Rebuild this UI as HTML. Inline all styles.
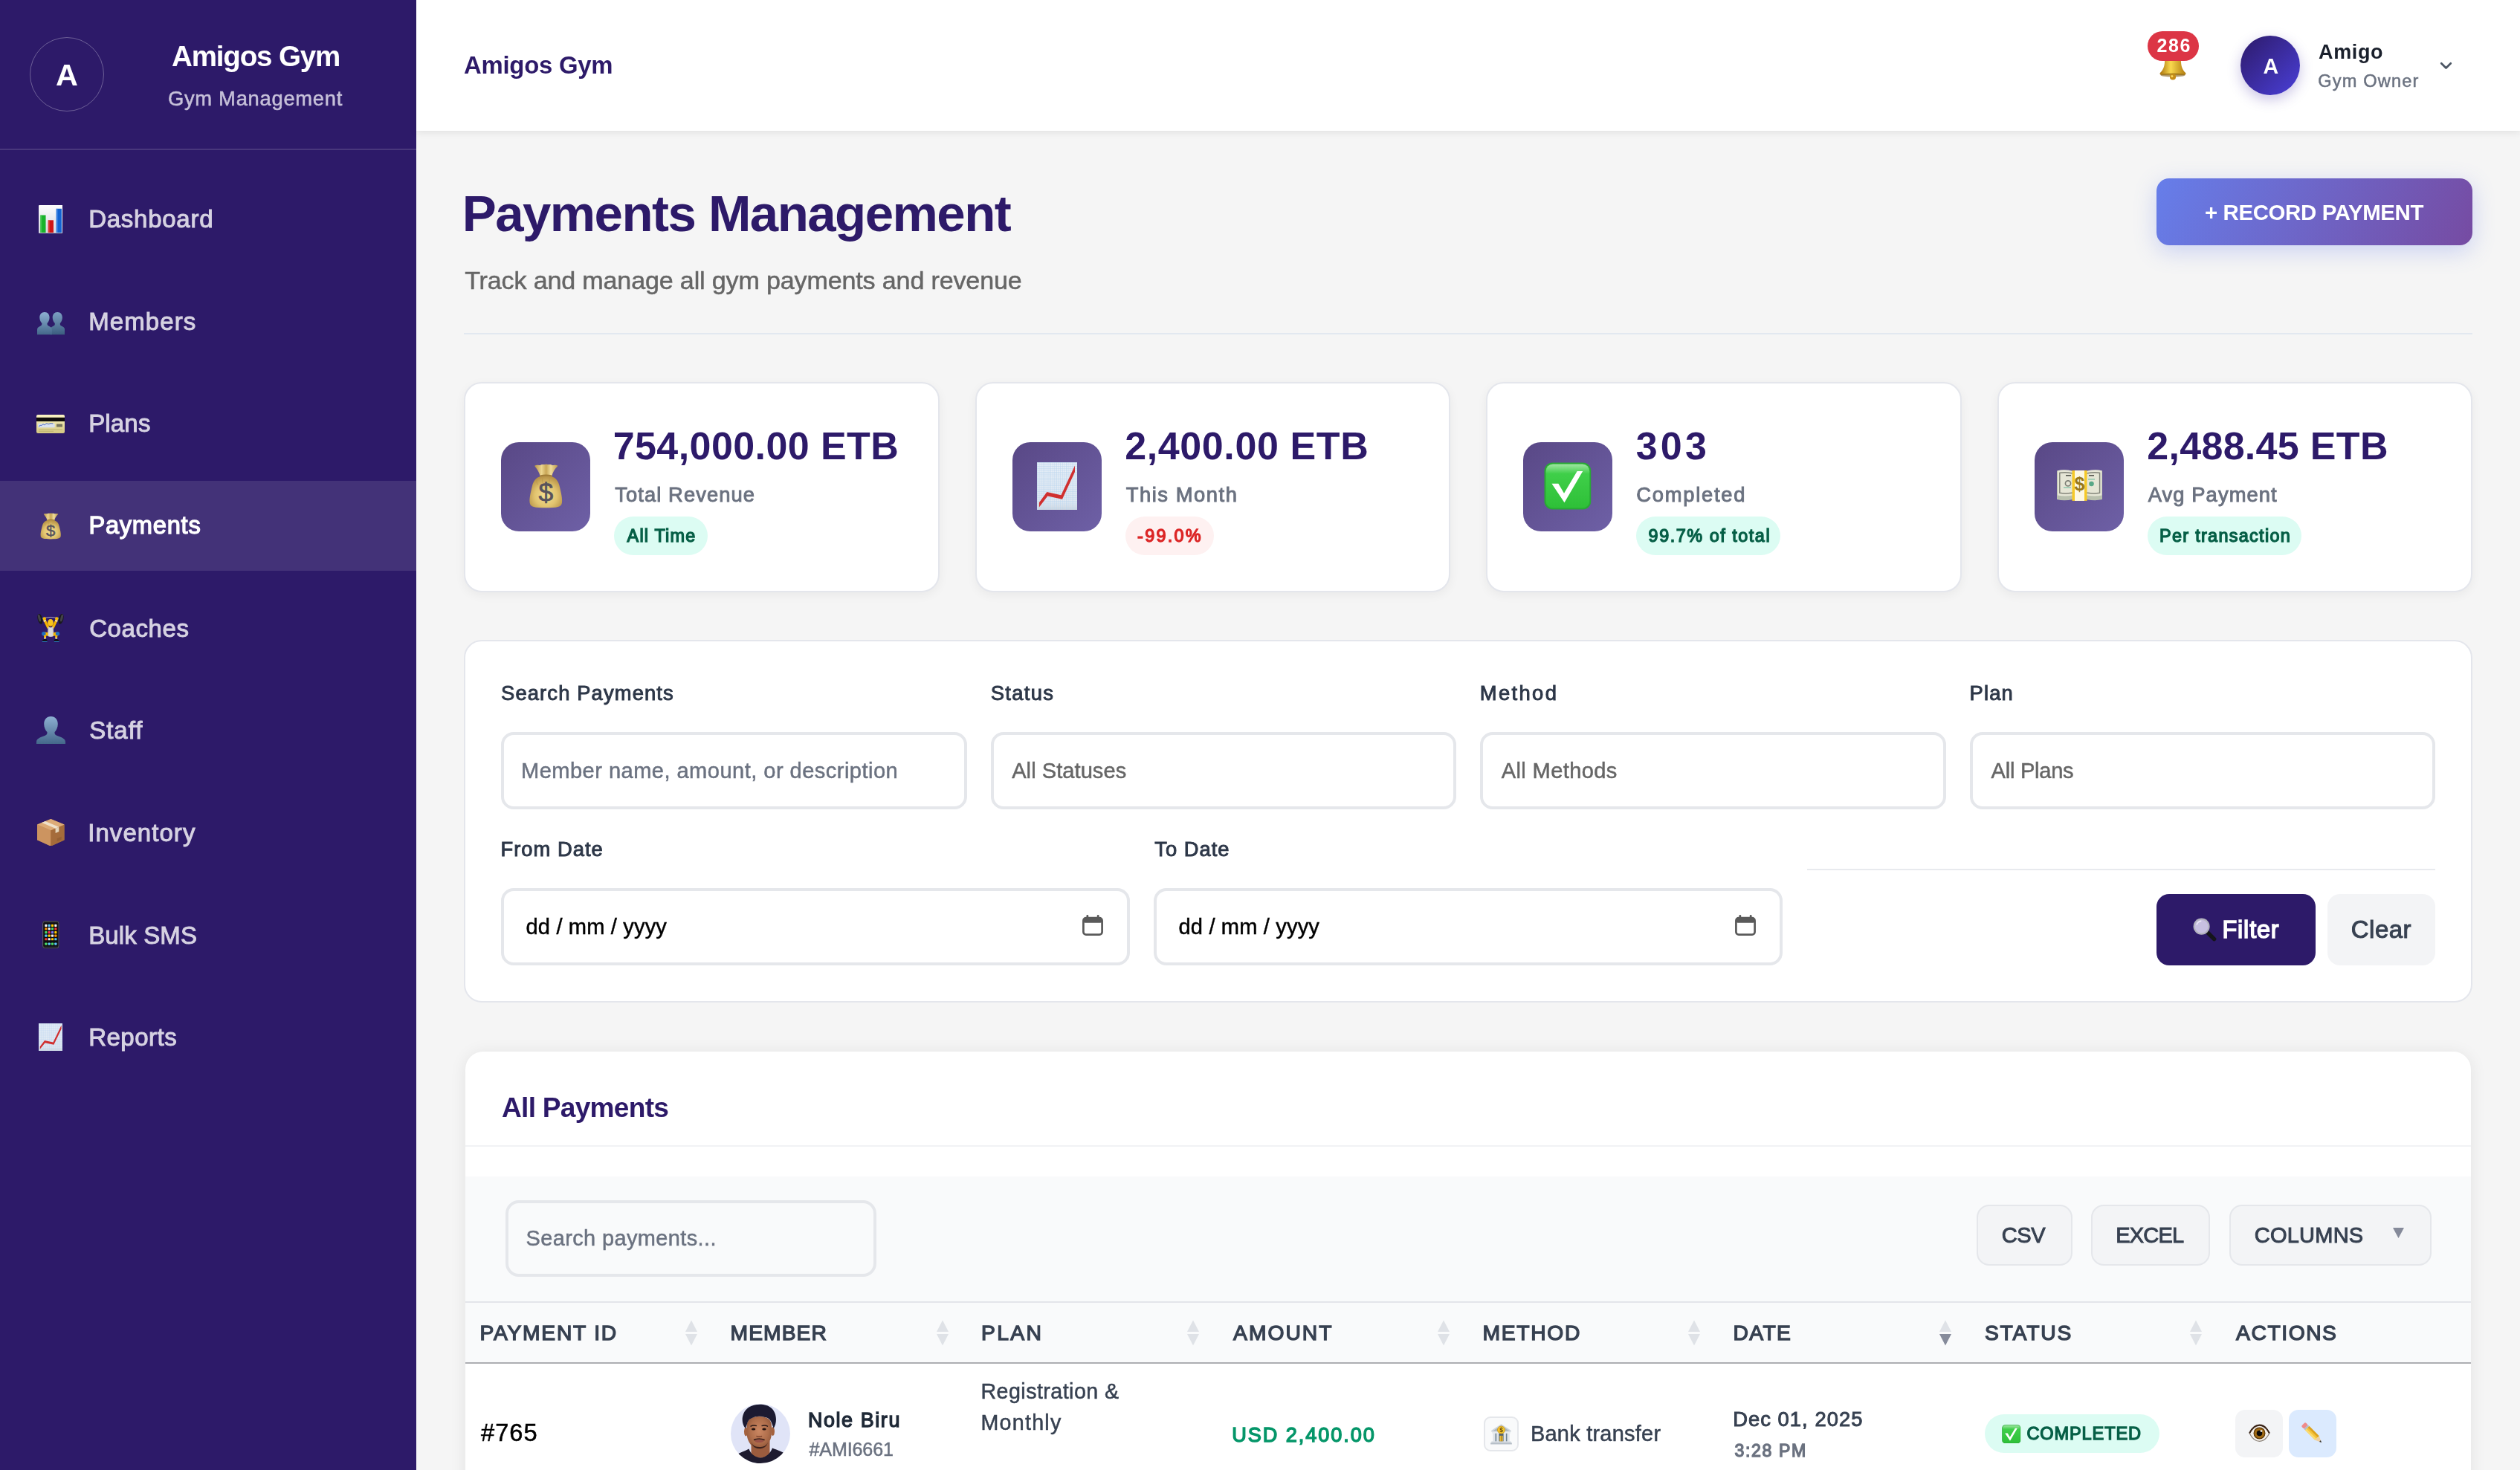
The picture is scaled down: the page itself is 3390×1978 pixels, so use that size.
<!DOCTYPE html>
<html lang="en"><head><meta charset="utf-8"><title>Payments Management - Amigos Gym</title>
<style>
html,body{margin:0;padding:0}
html{width:3390px;height:1978px;overflow:hidden}
body{width:3390px;height:1978px;overflow:hidden;position:relative;background:#f5f5f5;font-family:"Liberation Sans",sans-serif}
#page{position:absolute;left:0;top:0;width:3390px;height:1978px;overflow:hidden}
#boxes div{position:absolute}
.t{position:absolute;white-space:nowrap;line-height:1;font-family:"Liberation Sans",sans-serif;z-index:5}
svg{z-index:4}
</style></head><body><div id="page">
<svg width="0" height="0" style="position:absolute">
<defs>
<radialGradient id="gGold" cx=".5" cy=".62" r=".62"><stop offset="0" stop-color="#f4df94"/><stop offset=".55" stop-color="#e2c46f"/><stop offset="1" stop-color="#b48f45"/></radialGradient>
<linearGradient id="gRuf" x1="0" y1="0" x2="1" y2="0"><stop offset="0" stop-color="#b99547"/><stop offset=".3" stop-color="#ecd58e"/><stop offset=".5" stop-color="#c9a655"/><stop offset=".7" stop-color="#f0dc9a"/><stop offset="1" stop-color="#b99547"/></linearGradient>
<linearGradient id="gBust" x1="0" y1="0" x2="0" y2="1"><stop offset="0" stop-color="#8db0d2"/><stop offset="1" stop-color="#44678a"/></linearGradient>
<linearGradient id="gBust2" x1="0" y1="0" x2="0" y2="1"><stop offset="0" stop-color="#7c9fc2"/><stop offset="1" stop-color="#3b5d7f"/></linearGradient>
<linearGradient id="gPanel" x1="0" y1="0" x2="0" y2="1"><stop offset="0" stop-color="#fdfdfe"/><stop offset="1" stop-color="#d6d8e0"/></linearGradient>
<linearGradient id="gPaper" x1="0" y1="0" x2="0" y2="1"><stop offset="0" stop-color="#e9f0f8"/><stop offset=".85" stop-color="#e3e9f1"/><stop offset="1" stop-color="#d2d6dc"/></linearGradient>
<linearGradient id="gBell" x1="0" y1="0" x2="1" y2="0"><stop offset="0" stop-color="#a9720c"/><stop offset=".42" stop-color="#f9d84e"/><stop offset="1" stop-color="#b07a0e"/></linearGradient>
<linearGradient id="gCheck" x1="0" y1="0" x2="0" y2="1"><stop offset="0" stop-color="#9fe6a2"/><stop offset=".22" stop-color="#3fcf49"/><stop offset="1" stop-color="#2ec038"/></linearGradient>
<linearGradient id="gCard" x1="0" y1="0" x2="0" y2="1"><stop offset="0" stop-color="#fbf4c4"/><stop offset="1" stop-color="#d5c882"/></linearGradient>
<pattern id="pGrid" width="2.6" height="2.6" patternUnits="userSpaceOnUse"><rect width="2.6" height="2.6" fill="none"/><path d="M0 .3H2.600M.3 0V2.600" stroke="#bcd6ee" stroke-width=".7"/></pattern>

<symbol preserveAspectRatio="none" id="iBar" viewBox="0 0 33 38"><rect width="33" height="38" rx="1" fill="url(#gPanel)"/><rect x="2.300" y="13.500" width="7.300" height="24" fill="#19b32b"/><rect x="12.800" y="20.300" width="7.300" height="17.200" fill="#cf1414"/><rect x="23.800" y="4.800" width="7.300" height="32.700" fill="#1263d3"/><rect x="2.300" y="13.500" width="2" height="24" fill="#5bd068" opacity=".6"/><rect x="12.800" y="20.300" width="2" height="17.200" fill="#ec5a5a" opacity=".6"/><rect x="23.800" y="4.800" width="2" height="32.700" fill="#5b9bee" opacity=".6"/><rect y="37" width="33" height="1" fill="#b6b9c4"/></symbol>

<symbol preserveAspectRatio="none" id="iBusts" viewBox="0 0 37.200 31"><path d="M27.300 0c4.300 0 6.600 3.200 6.600 7.400 0 3.200-1.300 6-3 7.700-.4 1.900.2 3.200 2 4 2.800 1.200 4.300 2.300 4.300 5.400V31H17.400v-6.500c0-3.100 1.500-4.200 4.300-5.400 1.800-.800 2.400-2.100 2-4-1.700-1.700-3-4.500-3-7.700C20.700 3.200 23 0 27.300 0z" fill="url(#gBust2)"/><path d="M10 0c4.300 0 6.600 3.200 6.600 7.400 0 3.200-1.300 6-3 7.700-.4 1.900.2 3.200 2 4 2.800 1.200 4.300 2.300 4.300 5.400V31H0v-6.500c0-3.100 1.500-4.200 4.300-5.400 1.800-.800 2.400-2.100 2-4-1.700-1.700-3-4.500-3-7.700C3.300 3.200 5.700 0 10 0z" fill="url(#gBust)"/></symbol>

<symbol preserveAspectRatio="none" id="iBust" viewBox="0 0 39 37.500"><path d="M19.500 0c6 0 9.300 4.400 9.300 10.300 0 4.500-1.800 8.300-4.200 10.700-.5 2.400.6 4.100 3.300 5.100 5.500 2 11.100 3.600 11.100 8.400v3H0v-3c0-4.800 5.600-6.400 11.100-8.400 2.700-1 3.800-2.700 3.300-5.100-2.400-2.400-4.200-6.200-4.200-10.700C10.200 4.400 13.500 0 19.500 0z" fill="url(#gBust)"/></symbol>

<symbol preserveAspectRatio="none" id="iCard" viewBox="0 0 38 25"><rect width="38" height="25" rx="2" fill="url(#gCard)"/><rect y="3.800" width="38" height="5.200" fill="#100d0b"/><rect x="2.200" y="11.800" width="22.500" height="5.400" rx=".6" fill="#d9e1ef"/><path d="M3.500 16c1.600-3.200 3-.2 4.400-2.400s2.600 1.800 4.400-.8 2.800 1 5.400-.6 2.600.4 4.600-.5" stroke="#2f4fb5" stroke-width=".9" fill="none"/><rect x="27" y="12.400" width="8" height="4" rx=".5" fill="#77745f"/><rect x="3" y="19.500" width="32" height="1" fill="#b9ad6b" opacity=".8"/><rect x="3" y="21.800" width="20" height="1" fill="#b9ad6b" opacity=".8"/></symbol>

<symbol preserveAspectRatio="none" id="iBag" viewBox="0 0 48 62"><path d="M9 4.600c3.200-1.700 5.700 0 8-1 3-1.400 5 .2 7.500-1.200 2.500 1.400 4.500-.2 7.500 1.200 2.300 1 4.800-.7 8 1C36 9 32.700 13.500 32 19H16.500C15.800 13.500 12 9 9 4.600z" fill="url(#gRuf)"/><path d="M16.300 17.400c5-1.300 10.700-1.300 15.900 0l.3 2.600H16z" fill="#a17d36"/><path d="M16.200 19c-5 1.400-8.700 5.300-10.400 13-1.900 8.300-4 16-3.200 22 .8 5.600 6 6.800 21.400 6.800s20.600-1.200 21.400-6.800c.8-6-1.300-13.700-3.200-22-1.700-7.700-5.400-11.600-10.400-13-5-1-10.600-1-15.600 0z" fill="url(#gGold)"/><path d="M20 20c-1 3-1 6 .5 9M28 20c1 3 1 5.500-.3 8M12 23c-.5 3 0 5 1.500 7" stroke="#b7924a" stroke-width=".9" fill="none" opacity=".7"/><text x="24" y="53" font-family="Liberation Sans" font-size="35" text-anchor="middle" fill="#57525c" stroke="#57525c" stroke-width=".7">$</text></symbol>

<symbol preserveAspectRatio="none" id="iLift" viewBox="0 0 36 38"><path d="M7 5.800Q18 3 29.400 5.800" stroke="#aaa5c6" stroke-width="1" fill="none"/><rect x="6.300" y="5" width="1.600" height="2.600" fill="#2f6fbf" transform="rotate(-14 7 6.300)"/><rect x="28.300" y="5" width="1.600" height="2.600" fill="#2f6fbf" transform="rotate(14 29 6.300)"/><ellipse cx="3.900" cy="6.900" rx="3.200" ry="7" transform="rotate(-14 3.900 6.900)" fill="#19191c"/><ellipse cx="3.300" cy="5.500" rx="1.600" ry="5" transform="rotate(-14 3.900 6.900)" fill="#56565c" opacity=".7"/><ellipse cx="32.100" cy="6.900" rx="3.200" ry="7" transform="rotate(14 32.100 6.900)" fill="#19191c"/><ellipse cx="32.700" cy="5.500" rx="1.600" ry="5" transform="rotate(14 32.100 6.900)" fill="#56565c" opacity=".7"/><path d="M10 8.500L14.700 18.200" stroke="#f5b400" stroke-width="3.300" stroke-linecap="round"/><path d="M26 8.500L21.400 18.200" stroke="#f5b400" stroke-width="3.300" stroke-linecap="round"/><path d="M8.700 10l3-1.300" stroke="#f2f2f4" stroke-width="1.400"/><path d="M27.300 10l-3-1.300" stroke="#f2f2f4" stroke-width="1.400"/><circle cx="9.800" cy="6.400" r="2.200" fill="#f8bc06"/><circle cx="26.300" cy="6.400" r="2.200" fill="#f8bc06"/><path d="M14.600 17Q18 19.600 21.600 17L22.500 28.500Q22.500 30.900 18.200 30.900T13.900 28.500z" fill="#c4c4c8"/><path d="M15.800 18.200q2.300 1.400 4.600 0l.6 11.500h-5.800z" fill="#d9d9dd"/><ellipse cx="18" cy="11.800" rx="3.900" ry="4.800" fill="#f9c31f"/><path d="M14.800 14.200c1 2 5.400 2 6.400 0-.5 1.800-1.600 2.500-3.200 2.500s-2.700-.7-3.200-2.500z" fill="#e29600"/><path d="M14.600 25.300L9 24.300 8.500 29l6.100.7z" fill="#f5b400"/><path d="M21.800 25.300l5.600-1 .5 4.700-6.100.7z" fill="#f5b400"/><circle cx="8.800" cy="26.700" r="2.700" fill="#1f6fc2"/><circle cx="27.500" cy="26.700" r="2.700" fill="#1f6fc2"/><path d="M8.800 28.500l3.400.7-.3 3.800H9.400z" fill="#f5b400"/><path d="M27.500 28.500l-3.400.7.300 3.800h2.500z" fill="#f5b400"/><rect x="9.200" y="32.100" width="2.900" height="1.500" fill="#f2f2f4"/><rect x="24.200" y="32.100" width="2.900" height="1.500" fill="#f2f2f4"/><path d="M6.800 36.600Q8 33.700 12.100 33.500l1.400 2-.1 1.700-6.600.2z" fill="#131318"/><path d="M29.500 36.600Q28.300 33.700 24.200 33.500l-1.400 2 .1 1.700 6.600.2z" fill="#131318"/><rect x="6.700" y="37" width="6.800" height=".9" fill="#2f8fe0"/><rect x="22.800" y="37" width="6.800" height=".9" fill="#2f8fe0"/></symbol>

<symbol preserveAspectRatio="none" id="iBox" viewBox="0 0 37 37"><path d="M18.500 0L37 7.500v21L18.500 37 0 28.500v-21z" fill="#b57a47"/><path d="M0 7.500L18.500 15.500V37L0 28.500z" fill="#cc9460"/><path d="M37 7.500L18.500 15.500V37L37 28.500z" fill="#a56c3b"/><path d="M18.500 0L37 7.500 18.500 15.500 0 7.500z" fill="#ddab77"/><path d="M11 3l18.500 7.800-4.700 2L6.300 5z" fill="#efe1ca"/><path d="M24.800 12.800l4.700-2v6.400l-4.700 2z" fill="#e4d5ba"/><path d="M27 26.500l6-2.600v4l-6 2.600z" fill="#8a5a30" opacity=".55"/></symbol>

<symbol preserveAspectRatio="none" id="iPhone" viewBox="0 0 23 37.500"><rect width="23" height="37.500" rx="3.600" fill="#1b1b21"/><rect x=".6" y=".6" width="21.800" height="36.300" rx="3.100" fill="none" stroke="#6b6b78" stroke-width=".8"/><rect x="2.200" y="3.200" width="18.600" height="31" rx="1" fill="#0c0c12"/><g><rect x="3.300" y="4.800" width="3.200" height="3.200" rx=".7" fill="#f4f4f4"/><rect x="7.700" y="4.800" width="3.200" height="3.200" rx=".7" fill="#5ac8fa"/><rect x="12.100" y="4.800" width="3.200" height="3.200" rx=".7" fill="#ffcc00"/><rect x="16.500" y="4.800" width="3.200" height="3.200" rx=".7" fill="#f4f4f4"/><rect x="3.300" y="9.400" width="3.200" height="3.200" rx=".7" fill="#ff9500"/><rect x="7.700" y="9.400" width="3.200" height="3.200" rx=".7" fill="#f4f4f4"/><rect x="12.100" y="9.400" width="3.200" height="3.200" rx=".7" fill="#4cd964"/><rect x="16.500" y="9.400" width="3.200" height="3.200" rx=".7" fill="#ff3b30"/><rect x="3.300" y="14" width="3.200" height="3.200" rx=".7" fill="#4cd964"/><rect x="7.700" y="14" width="3.200" height="3.200" rx=".7" fill="#ff2d55"/><rect x="12.100" y="14" width="3.200" height="3.200" rx=".7" fill="#7a78f0"/><rect x="16.500" y="14" width="3.200" height="3.200" rx=".7" fill="#ffcc00"/><rect x="3.300" y="18.600" width="3.200" height="3.200" rx=".7" fill="#5ac8fa"/><rect x="7.700" y="18.600" width="3.200" height="3.200" rx=".7" fill="#ffcc00"/><rect x="12.100" y="18.600" width="3.200" height="3.200" rx=".7" fill="#f4f4f4"/><rect x="16.500" y="18.600" width="3.200" height="3.200" rx=".7" fill="#ff9500"/><rect x="3.300" y="23.200" width="3.200" height="3.200" rx=".7" fill="#ff3b30"/><rect x="7.700" y="23.200" width="3.200" height="3.200" rx=".7" fill="#f4f4f4"/><rect x="12.100" y="23.200" width="3.200" height="3.200" rx=".7" fill="#ffcc00"/><rect x="16.500" y="23.200" width="3.200" height="3.200" rx=".7" fill="#5ac8fa"/><rect x="3.300" y="29.600" width="3.200" height="3.200" rx=".7" fill="#4cd964"/><rect x="7.700" y="29.600" width="3.200" height="3.200" rx=".7" fill="#5ac8fa"/><rect x="12.100" y="29.600" width="3.200" height="3.200" rx=".7" fill="#4cd964"/><rect x="16.500" y="29.600" width="3.200" height="3.200" rx=".7" fill="#5ac8fa"/></g></symbol>

<symbol preserveAspectRatio="none" id="iChartUp" viewBox="0 0 54.300 64.300"><rect width="54.300" height="64.300" fill="url(#gPaper)"/><rect width="54.300" height="64.300" fill="url(#pGrid)"/><path d="M2.900 54.200L13.300 40l19.100 4.200L51 4.500v8.500L34 49.800l-19.700-4.300L2.900 60.500z" fill="#d02f2f"/></symbol>

<symbol preserveAspectRatio="none" id="iBell" viewBox="0 0 40 40"><path d="M20 2.500c1.600 0 2.800 1.100 2.800 2.600 5 1.500 7 5.800 7.200 11.400.2 5.500 1.600 9.500 5.500 13.500.8.900.3 2.500-1 2.500h-29c-1.300 0-1.800-1.600-1-2.500 3.900-4 5.300-8 5.500-13.500.2-5.600 2.200-9.900 7.200-11.400 0-1.500 1.200-2.600 2.800-2.600z" fill="url(#gBell)"/><ellipse cx="20" cy="32.800" rx="15" ry="2.300" fill="#7d5507" opacity=".6"/><circle cx="20" cy="35" r="3.700" fill="#c58c17"/><circle cx="19" cy="34.200" r="1.400" fill="#f8d75e"/></symbol>

<symbol preserveAspectRatio="none" id="iCheck" viewBox="0 0 64 64"><rect x=".5" y=".5" width="63" height="63" rx="11" fill="#28a934"/><rect x="2.500" y="2.500" width="59" height="59" rx="9.500" fill="url(#gCheck)"/><path d="M10.500 28.900h9l7.600 13L44.800 11.900h7.600L27.600 54.300z" fill="#fff"/></symbol>

<symbol preserveAspectRatio="none" id="iBill" viewBox="0 0 61.400 42"><path d="M0 1.500c7-1.500 14-1 21 .5h19.400c7-1.500 14-2 21-.500V40c-7 1.800-14 1.500-21 0H21c-7 1.500-14 1.800-21 0z" fill="#b9c0ae"/><path d="M1 1.200c7-1.400 13.500-1 20 .5h19.400c6.500-1.500 13-1.900 20-.5v33.300c-7 1.500-13.500 1.300-20 0H21c-6.500 1.300-13 1.500-20 0z" fill="#e6e6d6"/><path d="M3.800 4.300c5.500-1 11-.7 16.200.4h21.400c5.200-1.100 10.700-1.400 16.200-.4v27c-5.500 1.100-11 .9-16.200 0H20c-5.200.9-10.700 1.100-16.200 0z" fill="none" stroke="#83857a" stroke-width="1.500"/><circle cx="15" cy="18.500" r="3.600" fill="#e6e6d6" stroke="#7c7e74" stroke-width="1.600"/><circle cx="46.500" cy="19" r="3.300" fill="#58a887"/><rect x="9" y="23.500" width="10" height="1.300" fill="#7fc3a6"/><rect x="42" y="12.300" width="9" height="1.300" fill="#7fc3a6"/><rect x="12" y="7" width="7" height="1.600" fill="#55564f"/><rect x="43" y="7" width="7" height="1.600" fill="#55564f"/><rect x="20.500" y="1" width="20" height="41" fill="#f6c928"/><rect x="24" y="1" width="13" height="41" fill="#fdf8e3"/><text x="30.500" y="28.500" font-family="Liberation Sans" font-weight="bold" font-size="25" text-anchor="middle" fill="#98791b">$</text></symbol>

<symbol preserveAspectRatio="none" id="iMag" viewBox="0 0 40 40"><path d="M25 25l11 11" stroke="#15151a" stroke-width="6.500" stroke-linecap="round"/><circle cx="16" cy="16" r="13" fill="#b3b3bf"/><circle cx="16" cy="16" r="10.500" fill="#c7c0e1"/><path d="M8.500 13c1-3 3.500-5 6.500-5.500" stroke="#ece9f7" stroke-width="1.800" fill="none" stroke-linecap="round"/></symbol>

<symbol preserveAspectRatio="none" id="iBank" viewBox="0 0 40 40"><path d="M3 14L20 3l17 11v2.500H3z" fill="#cfd6dd"/><path d="M5.500 14.800L20 5.500l14.500 9.300z" fill="#aab5bf"/><rect x="4" y="16.500" width="32" height="2.500" fill="#e6ebef"/><rect x="5.500" y="19" width="4.200" height="14" fill="#dfe5ea"/><rect x="11.800" y="19" width="4.200" height="14" fill="#dfe5ea"/><rect x="24" y="19" width="4.200" height="14" fill="#dfe5ea"/><rect x="30.300" y="19" width="4.200" height="14" fill="#dfe5ea"/><rect x="9.700" y="19" width="2.100" height="14" fill="#6b7f90"/><rect x="28.200" y="19" width="2.100" height="14" fill="#6b7f90"/><rect x="16" y="19" width="8" height="14" fill="#4c6173"/><rect x="17.200" y="23" width="5.600" height="10" fill="#e8b93a"/><rect x="19.700" y="23" width=".8" height="10" fill="#7a5c10"/><rect x="3" y="33" width="34" height="2.200" fill="#cfd6dd"/><rect x="1.500" y="35.200" width="37" height="2.800" fill="#b4bec7"/><circle cx="20" cy="13" r="6.500" fill="#f3c531" stroke="#c8951a" stroke-width="1"/><text x="20" y="17" font-family="Liberation Sans" font-weight="bold" font-size="10.500" text-anchor="middle" fill="#6e4f06">$</text></symbol>

<symbol preserveAspectRatio="none" id="iEye" viewBox="0 0 40 40"><path d="M1.500 20C7 9 13.500 5 20 5s13 4 18.500 15C33 31 26.500 35 20 35S7 31 1.500 20z" fill="#f3efe9" stroke="#8a8078" stroke-width="1.600"/><path d="M1.500 20C7 9 13.500 5 20 5s13 4 18.500 15" fill="none" stroke="#3a2418" stroke-width="2.800"/><circle cx="20" cy="20" r="10.500" fill="#a06a14"/><circle cx="20" cy="20" r="10.200" fill="none" stroke="#5a3608" stroke-width="1.600"/><circle cx="20" cy="20" r="5.200" fill="#0d0a08"/><circle cx="23.500" cy="16" r="2" fill="#fff" opacity=".9"/></symbol>

<symbol preserveAspectRatio="none" id="iPencil" viewBox="0 0 40 40"><g transform="rotate(-45 20 20)"><rect x="15" y="-4" width="10" height="7" rx="2.500" fill="#f08a8a"/><rect x="15" y="2.500" width="10" height="3.500" fill="#b8bcc4"/><rect x="15" y="6" width="10" height="24" fill="#f5c43a"/><rect x="15" y="6" width="3.300" height="24" fill="#fadb74"/><rect x="21.700" y="6" width="3.300" height="24" fill="#dba11f"/><path d="M15 30h10l-5 11z" fill="#edcfa4"/><path d="M18.300 37.300l1.700 3.700 1.700-3.700z" fill="#2b2b2b"/></g></symbol>
</defs></svg>
<div id="boxes">
<div style="left:0px;top:0px;width:560px;height:1978px;background:#2d1a69;"></div>
<div style="left:0px;top:200px;width:560px;height:2px;background:rgba(255,255,255,.13);"></div>
<div style="left:40px;top:50px;width:100px;height:100px;border-radius:50%;border:1px solid rgba(255,255,255,.3);box-sizing:border-box;"></div>
<div style="left:0px;top:647px;width:560px;height:121px;background:#433278;"></div>
<div style="left:560px;top:0px;width:2830px;height:176px;background:#fff;box-shadow:0 2px 10px rgba(0,0,0,.09);"></div>
<div style="left:2889px;top:42px;width:69px;height:40px;background:#dc3545;border-radius:20px;z-index:3;"></div>
<div style="left:3014px;top:48px;width:80px;height:80px;border-radius:50%;background:linear-gradient(135deg,#2d1a69 0%,#4a3fd8 100%);box-shadow:0 6px 18px rgba(60,40,160,.28);"></div>
<div style="left:624px;top:448px;width:2702px;height:2px;background:#e2e8f0;"></div>
<div style="left:2901px;top:240px;width:425px;height:90px;border-radius:17px;background:linear-gradient(115deg,#667eea 0%,#764ba2 100%);box-shadow:0 8px 30px rgba(102,126,234,.30);"></div>
<div style="left:624.0px;top:514px;width:639.5px;height:283px;box-sizing:border-box;background:#fff;border:2px solid #e4e6ec;border-radius:24px;box-shadow:0 4px 14px rgba(0,0,0,.05);"></div>
<div style="left:674.0px;top:595px;width:120px;height:120px;border-radius:24px;background:linear-gradient(135deg,#594886 0%,#6e60a6 100%);"></div>
<div style="left:826.0px;top:695px;width:125.7px;height:52px;border-radius:26px;background:#dcfcf3;"></div>
<div style="left:1311.5px;top:514px;width:639.5px;height:283px;box-sizing:border-box;background:#fff;border:2px solid #e4e6ec;border-radius:24px;box-shadow:0 4px 14px rgba(0,0,0,.05);"></div>
<div style="left:1361.5px;top:595px;width:120px;height:120px;border-radius:24px;background:linear-gradient(135deg,#594886 0%,#6e60a6 100%);"></div>
<div style="left:1513.5px;top:695px;width:119.4px;height:52px;border-radius:26px;background:#fef1f1;"></div>
<div style="left:1999.0px;top:514px;width:639.5px;height:283px;box-sizing:border-box;background:#fff;border:2px solid #e4e6ec;border-radius:24px;box-shadow:0 4px 14px rgba(0,0,0,.05);"></div>
<div style="left:2049.0px;top:595px;width:120px;height:120px;border-radius:24px;background:linear-gradient(135deg,#594886 0%,#6e60a6 100%);"></div>
<div style="left:2201.0px;top:695px;width:194.4px;height:52px;border-radius:26px;background:#dcfcf3;"></div>
<div style="left:2686.5px;top:514px;width:639.5px;height:283px;box-sizing:border-box;background:#fff;border:2px solid #e4e6ec;border-radius:24px;box-shadow:0 4px 14px rgba(0,0,0,.05);"></div>
<div style="left:2736.5px;top:595px;width:120px;height:120px;border-radius:24px;background:linear-gradient(135deg,#594886 0%,#6e60a6 100%);"></div>
<div style="left:2888.5px;top:695px;width:207.8px;height:52px;border-radius:26px;background:#dcfcf3;"></div>
<div style="left:624px;top:861px;width:2702px;height:488px;box-sizing:border-box;background:#fff;border:2px solid #e4e6ec;border-radius:24px;"></div>
<div style="left:674.0px;top:985px;width:626.5px;height:104px;box-sizing:border-box;border:4px solid #e5e7eb;border-radius:17px;background:#fff;"></div>
<div style="left:1332.5px;top:985px;width:626.5px;height:104px;box-sizing:border-box;border:4px solid #e5e7eb;border-radius:17px;background:#fff;"></div>
<div style="left:1991.0px;top:985px;width:626.5px;height:104px;box-sizing:border-box;border:4px solid #e5e7eb;border-radius:17px;background:#fff;"></div>
<div style="left:2649.5px;top:985px;width:626.5px;height:104px;box-sizing:border-box;border:4px solid #e5e7eb;border-radius:17px;background:#fff;"></div>
<div style="left:674px;top:1195px;width:845.5px;height:104px;box-sizing:border-box;border:4px solid #e5e7eb;border-radius:17px;background:#fff;"></div>
<div style="left:1552px;top:1195px;width:845.5px;height:104px;box-sizing:border-box;border:4px solid #e5e7eb;border-radius:17px;background:#fff;"></div>
<div style="left:2431px;top:1169px;width:845px;height:2px;background:#e8eaee;"></div>
<div style="left:2901px;top:1203px;width:214px;height:96px;border-radius:17px;background:#2d1a69;"></div>
<div style="left:3131px;top:1203px;width:145px;height:96px;border-radius:17px;background:#f3f4f6;"></div>
<div style="left:626px;top:1415px;width:2698px;height:700px;background:#fff;border-radius:24px;box-shadow:0 2px 22px rgba(0,0,0,.08);overflow:hidden;"><div style="left:0;top:126px;width:2698px;height:2px;background:#f1f2f5"></div><div style="left:0;top:168px;width:2698px;height:168px;background:#f9fafb"></div><div style="left:0;top:336px;width:2698px;height:2px;background:#e3e5ea"></div><div style="left:0;top:338px;width:2698px;height:80px;background:#f9fafb"></div><div style="left:0;top:418px;width:2698px;height:2px;background:#adaeb2"></div></div>
<div style="left:680px;top:1615px;width:499px;height:103px;box-sizing:border-box;border:4px solid #e5e7eb;border-radius:18px;"></div>
<div style="left:2659px;top:1621px;width:128.5px;height:82px;box-sizing:border-box;border:2px solid #e5e7eb;border-radius:17px;background:#f3f4f6;"></div>
<div style="left:2813px;top:1621px;width:159.5px;height:82px;box-sizing:border-box;border:2px solid #e5e7eb;border-radius:17px;background:#f3f4f6;"></div>
<div style="left:2999px;top:1621px;width:271.5px;height:82px;box-sizing:border-box;border:2px solid #e5e7eb;border-radius:17px;background:#f3f4f6;"></div>
<div style="left:1996px;top:1906px;width:47px;height:47px;box-sizing:border-box;border:2px solid #e5e7eb;border-radius:9px;background:#f9fafb;"></div>
<div style="left:2670px;top:1903.3px;width:235px;height:51.7px;border-radius:26px;background:#dcfcf3;"></div>
<div style="left:3007.3px;top:1897.3px;width:63.4px;height:63.4px;border-radius:13px;background:#f3f4f6;"></div>
<div style="left:3079.3px;top:1897.3px;width:63.4px;height:63.4px;border-radius:13px;background:#dbeafe;"></div>
</div>
<svg style="position:absolute;left:922.2px;top:1776px" width="16" height="35" viewBox="0 0 16 35"><path d="M8 .5L16 16H0z" fill="#dfe2e7"/><path d="M0 19h16L8 34.500z" fill="#dfe2e7"/></svg>
<svg style="position:absolute;left:1259.5px;top:1776px" width="16" height="35" viewBox="0 0 16 35"><path d="M8 .5L16 16H0z" fill="#dfe2e7"/><path d="M0 19h16L8 34.500z" fill="#dfe2e7"/></svg>
<svg style="position:absolute;left:1596.8px;top:1776px" width="16" height="35" viewBox="0 0 16 35"><path d="M8 .5L16 16H0z" fill="#dfe2e7"/><path d="M0 19h16L8 34.500z" fill="#dfe2e7"/></svg>
<svg style="position:absolute;left:1934.0px;top:1776px" width="16" height="35" viewBox="0 0 16 35"><path d="M8 .5L16 16H0z" fill="#dfe2e7"/><path d="M0 19h16L8 34.500z" fill="#dfe2e7"/></svg>
<svg style="position:absolute;left:2271.2px;top:1776px" width="16" height="35" viewBox="0 0 16 35"><path d="M8 .5L16 16H0z" fill="#dfe2e7"/><path d="M0 19h16L8 34.500z" fill="#dfe2e7"/></svg>
<svg style="position:absolute;left:2608.5px;top:1776px" width="16" height="35" viewBox="0 0 16 35"><path d="M8 .5L16 16H0z" fill="#dfe2e7"/><path d="M0 19h16L8 34.500z" fill="#868b9b"/></svg>
<svg style="position:absolute;left:2945.8px;top:1776px" width="16" height="35" viewBox="0 0 16 35"><path d="M8 .5L16 16H0z" fill="#dfe2e7"/><path d="M0 19h16L8 34.500z" fill="#dfe2e7"/></svg>
<svg style="position:absolute;left:3219px;top:1651.500px" width="15" height="14" viewBox="0 0 15 14"><path d="M0 0h15L7.500 14z" fill="#858a9a"/></svg>
<svg style="position:absolute;left:3281.5px;top:82.5px" width="17" height="12" viewBox="0 0 17 12"><path d="M2.200 2.200L8.500 8.500l6.300-6.300" stroke="#4b5563" stroke-width="2.700" fill="none" stroke-linecap="round" stroke-linejoin="round"/></svg>
<svg style="position:absolute;left:1456px;top:1231px" width="28" height="28" viewBox="0 0 28 28"><rect x="5.500" y="0" width="2.700" height="5" rx="1.200" fill="#5a5a5a"/><rect x="19.800" y="0" width="2.700" height="5" rx="1.200" fill="#5a5a5a"/><rect x="1.400" y="4.200" width="25.200" height="22.400" rx="3.600" fill="none" stroke="#5a5a5a" stroke-width="2.700"/><rect x="1.400" y="4.200" width="25.200" height="6.500" rx="2.500" fill="#5a5a5a"/></svg>
<svg style="position:absolute;left:2333.5px;top:1231px" width="28" height="28" viewBox="0 0 28 28"><rect x="5.500" y="0" width="2.700" height="5" rx="1.200" fill="#5a5a5a"/><rect x="19.800" y="0" width="2.700" height="5" rx="1.200" fill="#5a5a5a"/><rect x="1.400" y="4.200" width="25.200" height="22.400" rx="3.600" fill="none" stroke="#5a5a5a" stroke-width="2.700"/><rect x="1.400" y="4.200" width="25.200" height="6.500" rx="2.500" fill="#5a5a5a"/></svg>
<svg style="position:absolute;left:51.6px;top:276px" width="32.8" height="38"><use href="#iBar" width="32.8" height="38"/></svg>
<svg style="position:absolute;left:49.6px;top:420px" width="37.2" height="30.5"><use href="#iBusts" width="37.2" height="30.5"/></svg>
<svg style="position:absolute;left:49.1px;top:557.7px" width="38.0" height="25.0"><use href="#iCard" width="38.0" height="25.0"/></svg>
<svg style="position:absolute;left:52.8px;top:688.6px" width="30.4" height="37.1"><use href="#iBag" width="30.4" height="37.1"/></svg>
<svg style="position:absolute;left:50px;top:826px" width="36" height="38"><use href="#iLift" width="36" height="38"/></svg>
<svg style="position:absolute;left:49px;top:964px" width="39" height="37.4"><use href="#iBust" width="39" height="37.4"/></svg>
<svg style="position:absolute;left:50px;top:1101.7px" width="36.7" height="36.6"><use href="#iBox" width="36.7" height="36.6"/></svg>
<svg style="position:absolute;left:57.3px;top:1239.3px" width="22.7" height="37.4"><use href="#iPhone" width="22.7" height="37.4"/></svg>
<svg style="position:absolute;left:51.7px;top:1377.3px" width="32.6" height="37.0"><use href="#iChartUp" width="32.6" height="37.0"/></svg>
<svg style="position:absolute;z-index:2;left:2901px;top:64.5px" width="44" height="44"><use href="#iBell" width="44" height="44"/></svg>
<svg style="position:absolute;left:709.7px;top:621.7px" width="48.6" height="62.5"><use href="#iBag" width="48.6" height="62.5"/></svg>
<svg style="position:absolute;left:1394.8px;top:621.7px" width="54.3" height="64.3"><use href="#iChartUp" width="54.3" height="64.3"/></svg>
<svg style="position:absolute;left:2077.1px;top:622.1px" width="63.8" height="63.9"><use href="#iCheck" width="63.8" height="63.9"/></svg>
<svg style="position:absolute;left:2766.5px;top:632.1px" width="61.4" height="41.9"><use href="#iBill" width="61.4" height="41.9"/></svg>
<svg style="position:absolute;left:2947.5px;top:1232.5px" width="34" height="34"><use href="#iMag" width="34" height="34"/></svg>
<svg style="position:absolute;left:2004px;top:1914px" width="31" height="31"><use href="#iBank" width="31" height="31"/></svg>
<svg style="position:absolute;left:2693px;top:1916.5px" width="25.5" height="25.5"><use href="#iCheck" width="25.5" height="25.5"/></svg>
<svg style="position:absolute;left:3024.5px;top:1914px" width="29" height="29"><use href="#iEye" width="29" height="29"/></svg>
<svg style="position:absolute;left:3095.5px;top:1913.5px" width="31" height="31"><use href="#iPencil" width="31" height="31"/></svg>
<svg style="position:absolute;left:983px;top:1889px" width="80" height="80" viewBox="0 0 80 80"><defs><clipPath id="avc"><circle cx="40" cy="40" r="40"/></clipPath><radialGradient id="gSkin" cx=".5" cy=".45" r=".6"><stop offset="0" stop-color="#cb8762"/><stop offset=".6" stop-color="#b06f4c"/><stop offset="1" stop-color="#8f5538"/></radialGradient></defs><g clip-path="url(#avc)"><rect width="80" height="80" fill="#e0e4f7"/><path d="M27.500 50v16c2 9 22 9 25 0V50z" fill="#9b5c3e"/><path d="M0 80l5.500-10.500c6-3.500 13.500-6 19-9C27 68 34 72.500 40 72.500c7 0 13-5.500 16-13 6 2.500 13.500 4.500 18 8.500L80 80z" fill="#1e1b2f"/><ellipse cx="20.400" cy="37.500" rx="2.400" ry="6" fill="#a4623f"/><ellipse cx="56.600" cy="37" rx="2.400" ry="6" fill="#a4623f"/><path d="M21.500 30c0-8 5.500-13 17-13s16.500 5 16.500 13l-.2 12c-.8 8-6.800 16-10.800 17.500-3 1-8 1-11 0C28 58 22.500 50 21.700 42z" fill="url(#gSkin)"/><path d="M27.500 51.500C29 57.500 33 60.300 38.500 60.300S48.500 57.500 50 51.500c-2 5-6 6.500-11.500 6.500s-9-1.500-11-6.500z" fill="#2b1817" opacity=".85"/><path d="M19.800 33C13.500 26 14.500 13 22 6.500 29-.5 47-1.500 54.500 5.500c8 7 8 20 3.200 27.500L55.500 27c-1.500-6-5.500-8.500-9.500-9-6-2-12-1.500-16 .5-5 1.500-7 4.500-8 8.500z" fill="#1b1a31"/><path d="M26.500 30.300q4-2.300 8.500-.6M41.500 29.700q4.500-1.700 8.500.6" stroke="#2a1817" stroke-width="1.400" fill="none"/><ellipse cx="30.600" cy="33.900" rx="2.700" ry="1.500" fill="#25130f"/><ellipse cx="45" cy="33.900" rx="2.700" ry="1.500" fill="#25130f"/><path d="M34.500 43.300q3.800 2 7.600 0" stroke="#7a3f2a" stroke-width="1.500" fill="none"/><ellipse cx="38.300" cy="50" rx="6" ry="2.100" fill="#9a5147"/><path d="M31 48.600q7.300-3.200 14.600 0" stroke="#3d221d" stroke-width="1.700" fill="none"/></g></svg>
<div id="tx" style="position:absolute;left:0;top:0;width:3390px;height:1978px;will-change:transform;z-index:5">
<span class="t" style="left:75.0px;top:79.9px;font-size:41.43px;color:#fff;font-weight:700;">A</span>
<span class="t" style="left:231.0px;top:56.7px;font-size:38.57px;color:#fff;font-weight:700;letter-spacing:-1.17px;">Amigos Gym</span>
<span class="t" style="left:225.9px;top:118.5px;font-size:27.36px;color:#c6c0d9;letter-spacing:0.72px;-webkit-text-stroke:0.5px #c6c0d9;">Gym Management</span>
<span class="t" style="left:119.2px;top:277.8px;font-size:33.0px;color:#d6d2e2;letter-spacing:0.74px;-webkit-text-stroke:1.0px #d6d2e2;">Dashboard</span>
<span class="t" style="left:119.2px;top:415.5px;font-size:33.0px;color:#d6d2e2;letter-spacing:1.11px;-webkit-text-stroke:1.0px #d6d2e2;">Members</span>
<span class="t" style="left:119.2px;top:553.2px;font-size:33.0px;color:#d6d2e2;letter-spacing:0.16px;-webkit-text-stroke:1.0px #d6d2e2;">Plans</span>
<span class="t" style="left:119.4px;top:691.2px;font-size:32.61px;color:#fff;letter-spacing:0.76px;-webkit-text-stroke:1.3px #fff;">Payments</span>
<span class="t" style="left:120.2px;top:828.6px;font-size:33.0px;color:#d6d2e2;letter-spacing:0.59px;-webkit-text-stroke:1.0px #d6d2e2;">Coaches</span>
<span class="t" style="left:120.2px;top:966.3px;font-size:33.0px;color:#d6d2e2;letter-spacing:0.97px;-webkit-text-stroke:1.0px #d6d2e2;">Staff</span>
<span class="t" style="left:118.2px;top:1104.0px;font-size:33.0px;color:#d6d2e2;letter-spacing:1.06px;-webkit-text-stroke:1.0px #d6d2e2;">Inventory</span>
<span class="t" style="left:119.2px;top:1241.7px;font-size:33.0px;color:#d6d2e2;letter-spacing:0.12px;-webkit-text-stroke:1.0px #d6d2e2;">Bulk SMS</span>
<span class="t" style="left:119.2px;top:1379.4px;font-size:33.0px;color:#d6d2e2;letter-spacing:0.49px;-webkit-text-stroke:1.0px #d6d2e2;">Reports</span>
<span class="t" style="left:624.0px;top:72.2px;font-size:32.86px;color:#2d1a69;font-weight:700;letter-spacing:-0.24px;">Amigos Gym</span>
<span class="t" style="left:2901.4px;top:49.0px;font-size:25px;color:#fff;font-weight:700;letter-spacing:1.60px;">286</span>
<span class="t" style="left:3044.4px;top:74.6px;font-size:28.57px;color:#fff;font-weight:700;">A</span>
<span class="t" style="left:3119.1px;top:57.1px;font-size:27px;color:#1a202c;font-weight:700;letter-spacing:0.62px;">Amigo</span>
<span class="t" style="left:3118.3px;top:97.8px;font-size:23.64px;color:#6b7280;letter-spacing:1.13px;-webkit-text-stroke:0.5px #6b7280;">Gym Owner</span>
<span class="t" style="left:621.7px;top:253.3px;font-size:69.0px;color:#2d1a69;font-weight:700;letter-spacing:-1.55px;">Payments Management</span>
<span class="t" style="left:625.2px;top:359.5px;font-size:34.07px;color:#666666;letter-spacing:-0.15px;-webkit-text-stroke:0.5px #666666;">Track and manage all gym payments and revenue</span>
<span class="t" style="left:2965.9px;top:271.3px;font-size:29.43px;color:#fff;font-weight:700;letter-spacing:-0.36px;">+ RECORD PAYMENT</span>
<span class="t" style="left:824.7px;top:574.3px;font-size:52px;color:#2d1a69;font-weight:700;letter-spacing:0.42px;">754,000.00 ETB</span>
<span class="t" style="left:827.2px;top:652.2px;font-size:27.35px;color:#6b7280;letter-spacing:1.09px;-webkit-text-stroke:0.95px #6b7280;">Total Revenue</span>
<span class="t" style="left:843.6px;top:710.4px;font-size:23.41px;color:#065f46;letter-spacing:1.19px;-webkit-text-stroke:1.35px #065f46;">All Time</span>
<span class="t" style="left:1513.2px;top:574.3px;font-size:52px;color:#2d1a69;font-weight:700;letter-spacing:0.61px;">2,400.00 ETB</span>
<span class="t" style="left:1514.7px;top:652.2px;font-size:27.35px;color:#6b7280;letter-spacing:1.55px;-webkit-text-stroke:0.95px #6b7280;">This Month</span>
<span class="t" style="left:1530.1px;top:710.4px;font-size:23.41px;color:#dc2626;letter-spacing:2.26px;-webkit-text-stroke:1.35px #dc2626;">-99.0%</span>
<span class="t" style="left:2200.7px;top:574.3px;font-size:52px;color:#2d1a69;font-weight:700;letter-spacing:4.23px;">303</span>
<span class="t" style="left:2201.2px;top:652.2px;font-size:27.35px;color:#6b7280;letter-spacing:1.75px;-webkit-text-stroke:0.95px #6b7280;">Completed</span>
<span class="t" style="left:2217.6px;top:710.4px;font-size:23.41px;color:#065f46;letter-spacing:1.53px;-webkit-text-stroke:1.35px #065f46;">99.7% of total</span>
<span class="t" style="left:2888.2px;top:574.3px;font-size:52px;color:#2d1a69;font-weight:700;letter-spacing:0.31px;">2,488.45 ETB</span>
<span class="t" style="left:2889.7px;top:652.2px;font-size:27.35px;color:#6b7280;letter-spacing:1.09px;-webkit-text-stroke:0.95px #6b7280;">Avg Payment</span>
<span class="t" style="left:2905.1px;top:710.4px;font-size:23.41px;color:#065f46;letter-spacing:1.30px;-webkit-text-stroke:1.35px #065f46;">Per transaction</span>
<span class="t" style="left:674.0px;top:918.5px;font-size:27.35px;color:#2d3748;letter-spacing:1.14px;-webkit-text-stroke:0.95px #2d3748;">Search Payments</span>
<span class="t" style="left:1332.8px;top:918.5px;font-size:27.35px;color:#2d3748;letter-spacing:1.32px;-webkit-text-stroke:0.95px #2d3748;">Status</span>
<span class="t" style="left:1990.7px;top:918.5px;font-size:27.35px;color:#2d3748;letter-spacing:2.41px;-webkit-text-stroke:0.95px #2d3748;">Method</span>
<span class="t" style="left:2649.5px;top:918.5px;font-size:27.35px;color:#2d3748;letter-spacing:1.18px;-webkit-text-stroke:0.95px #2d3748;">Plan</span>
<span class="t" style="left:673.5px;top:1128.5px;font-size:27.35px;color:#2d3748;letter-spacing:1.01px;-webkit-text-stroke:0.95px #2d3748;">From Date</span>
<span class="t" style="left:1553.3px;top:1128.5px;font-size:27.35px;color:#2d3748;letter-spacing:1.00px;-webkit-text-stroke:0.95px #2d3748;">To Date</span>
<span class="t" style="left:701.0px;top:1022.7px;font-size:29.07px;color:#6b7280;letter-spacing:0.46px;-webkit-text-stroke:0.5px #6b7280;">Member name, amount, or description</span>
<span class="t" style="left:1361.2px;top:1022.7px;font-size:29.07px;color:#666;letter-spacing:0.05px;-webkit-text-stroke:0.5px #666;">All Statuses</span>
<span class="t" style="left:2019.7px;top:1022.7px;font-size:29.07px;color:#666;letter-spacing:0.38px;-webkit-text-stroke:0.5px #666;">All Methods</span>
<span class="t" style="left:2678.6px;top:1022.7px;font-size:29.07px;color:#666;letter-spacing:-0.26px;-webkit-text-stroke:0.5px #666;">All Plans</span>
<span class="t" style="left:707.5px;top:1232.7px;font-size:29.07px;color:#000;letter-spacing:0.16px;-webkit-text-stroke:0.5px #000;">dd / mm / yyyy</span>
<span class="t" style="left:1585.5px;top:1232.7px;font-size:29.07px;color:#000;letter-spacing:0.16px;-webkit-text-stroke:0.5px #000;">dd / mm / yyyy</span>
<span class="t" style="left:2989.4px;top:1234.9px;font-size:32.36px;color:#fff;letter-spacing:0.87px;-webkit-text-stroke:1.5px #fff;">Filter</span>
<span class="t" style="left:3162.8px;top:1234.4px;font-size:33.0px;color:#374151;letter-spacing:0.46px;-webkit-text-stroke:1.0px #374151;">Clear</span>
<span class="t" style="left:675.0px;top:1471.9px;font-size:37.14px;color:#2d1a69;font-weight:700;letter-spacing:-0.75px;">All Payments</span>
<span class="t" style="left:707.5px;top:1652.2px;font-size:28.93px;color:#6b7280;letter-spacing:0.40px;-webkit-text-stroke:0.5px #6b7280;">Search payments...</span>
<span class="t" style="left:2692.8px;top:1647.8px;font-size:29px;color:#374151;letter-spacing:-0.47px;-webkit-text-stroke:0.95px #374151;">CSV</span>
<span class="t" style="left:2846.2px;top:1647.8px;font-size:29px;color:#374151;letter-spacing:-0.81px;-webkit-text-stroke:0.95px #374151;">EXCEL</span>
<span class="t" style="left:3032.8px;top:1647.8px;font-size:29px;color:#374151;letter-spacing:0.23px;-webkit-text-stroke:0.95px #374151;">COLUMNS</span>
<span class="t" style="left:645.4px;top:1779.4px;font-size:28.26px;color:#374151;letter-spacing:1.77px;-webkit-text-stroke:1.35px #374151;">PAYMENT ID</span>
<span class="t" style="left:982.6px;top:1779.4px;font-size:28.26px;color:#374151;letter-spacing:1.07px;-webkit-text-stroke:1.35px #374151;">MEMBER</span>
<span class="t" style="left:1319.9px;top:1779.4px;font-size:28.26px;color:#374151;letter-spacing:2.42px;-webkit-text-stroke:1.35px #374151;">PLAN</span>
<span class="t" style="left:1659.1px;top:1779.4px;font-size:28.26px;color:#374151;letter-spacing:1.98px;-webkit-text-stroke:1.35px #374151;">AMOUNT</span>
<span class="t" style="left:1994.4px;top:1779.4px;font-size:28.26px;color:#374151;letter-spacing:1.73px;-webkit-text-stroke:1.35px #374151;">METHOD</span>
<span class="t" style="left:2331.6px;top:1779.4px;font-size:28.26px;color:#374151;letter-spacing:1.32px;-webkit-text-stroke:1.35px #374151;">DATE</span>
<span class="t" style="left:2669.9px;top:1779.4px;font-size:28.26px;color:#374151;letter-spacing:1.85px;-webkit-text-stroke:1.35px #374151;">STATUS</span>
<span class="t" style="left:3008.1px;top:1779.4px;font-size:28.26px;color:#374151;letter-spacing:1.55px;-webkit-text-stroke:1.35px #374151;">ACTIONS</span>
<span class="t" style="left:647.0px;top:1912.4px;font-size:32.64px;color:#000;letter-spacing:1.02px;-webkit-text-stroke:0.5px #000;">#765</span>
<span class="t" style="left:1087.0px;top:1898.3px;font-size:26.84px;color:#1f2937;letter-spacing:1.62px;-webkit-text-stroke:1.35px #1f2937;">Nole Biru</span>
<span class="t" style="left:1088.5px;top:1937.8px;font-size:25.07px;color:#6b7280;letter-spacing:-0.12px;-webkit-text-stroke:0.5px #6b7280;">#AMI6661</span>
<span class="t" style="left:1319.5px;top:1858.4px;font-size:28.64px;color:#374151;letter-spacing:0.45px;-webkit-text-stroke:0.5px #374151;">Registration &amp;</span>
<span class="t" style="left:1319.5px;top:1899.7px;font-size:28.64px;color:#374151;letter-spacing:1.26px;-webkit-text-stroke:0.5px #374151;">Monthly</span>
<span class="t" style="left:1657.3px;top:1916.5px;font-size:27.12px;color:#059669;letter-spacing:1.92px;-webkit-text-stroke:1.35px #059669;">USD 2,400.00</span>
<span class="t" style="left:2058.9px;top:1914.5px;font-size:28.93px;color:#374151;letter-spacing:0.26px;-webkit-text-stroke:0.5px #374151;">Bank transfer</span>
<span class="t" style="left:2331.2px;top:1896.1px;font-size:27.35px;color:#374151;letter-spacing:1.05px;-webkit-text-stroke:0.95px #374151;">Dec 01, 2025</span>
<span class="t" style="left:2333.4px;top:1941.1px;font-size:23.12px;color:#6b7280;letter-spacing:1.64px;-webkit-text-stroke:1.35px #6b7280;">3:28 PM</span>
<span class="t" style="left:2726.4px;top:1917.8px;font-size:23.55px;color:#065f46;letter-spacing:0.89px;-webkit-text-stroke:1.35px #065f46;">COMPLETED</span>
</div>
</div></body></html>
